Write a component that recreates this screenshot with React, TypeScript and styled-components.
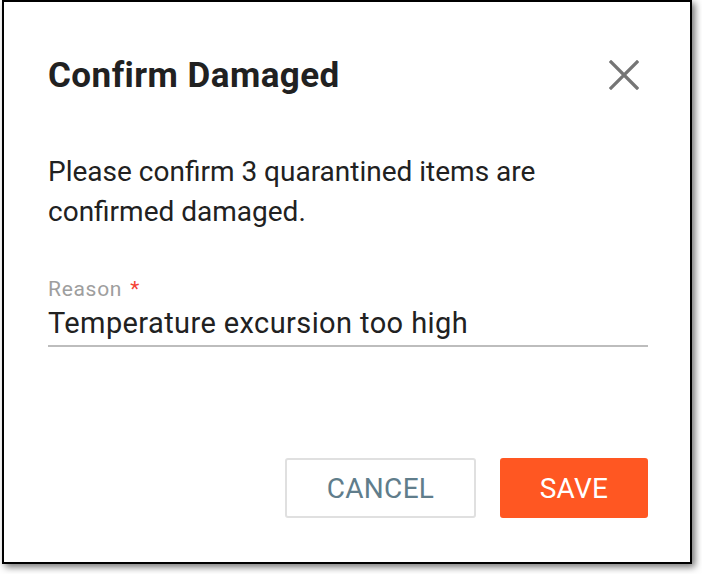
import React from "react";
import styled, { createGlobalStyle } from "styled-components";

const Global = createGlobalStyle`
  html, body { margin: 0; padding: 0; background: #ffffff; }
  body { font-family: Roboto, "Liberation Sans", Arial, sans-serif; }
`;

const Page = styled.div`
  width: 702px;
  height: 574px;
  background: #ffffff;
`;

const Dialog = styled.div`
  margin-left: 2px;
  width: 690px;
  height: 564px;
  box-sizing: border-box;
  border: 2px solid #000;
  background: #fff;
  box-shadow: 3px 3px 7px rgba(0, 0, 0, 0.55);
  padding: 54px 42px 44px 44px;
  display: flex;
  flex-direction: column;
`;

const Header = styled.div`
  display: flex;
  align-items: center;
  justify-content: space-between;
  height: 40px;
`;

const Title = styled.h2`
  margin: 0;
  font-size: 35px;
  line-height: 40px;
  font-weight: 700;
  color: #212121;
  letter-spacing: 0.45px;
`;

const CloseButton = styled.button`
  border: none;
  background: none;
  padding: 0;
  margin-right: 8px;
  margin-top: -2px;
  width: 32px;
  height: 32px;
  display: flex;
  align-items: center;
  justify-content: center;
  cursor: pointer;
`;

const Message = styled.p`
  margin: 56px 0 0 0;
  font-size: 28px;
  line-height: 40px;
  color: #212121;
`;

const Field = styled.div`
  margin-top: 45px;
  display: flex;
  flex-direction: column;
  gap: 4px;
`;

const Label = styled.label`
  font-size: 21px;
  color: #9e9e9e;
  line-height: 24px;
  letter-spacing: 0.7px;
`;

const Required = styled.span`
  color: #f44336;
  margin-left: 8px;
`;

const Value = styled.div`
  font-size: 29px;
  color: #212121;
  line-height: 36px;
  padding-bottom: 4px;
  border-bottom: 2px solid #bdbdbd;
  letter-spacing: 0.4px;
`;

const Actions = styled.div`
  margin-top: auto;
  display: flex;
  justify-content: flex-end;
  gap: 24px;
`;

const Button = styled.button<{ $primary?: boolean }>`
  height: 60px;
  min-width: ${(p) => (p.$primary ? "148px" : "191px")};
  box-sizing: border-box;
  border-radius: 3px;
  border: 2px solid ${(p) => (p.$primary ? "#ff5722" : "#e0e0e0")};
  background: ${(p) => (p.$primary ? "#ff5722" : "#ffffff")};
  color: ${(p) => (p.$primary ? "#ffffff" : "#607d8b")};
  font-family: Roboto, "Liberation Sans", Arial, sans-serif;
  font-size: 28px;
  font-weight: 400;
  letter-spacing: 0.3px;
  cursor: pointer;
`;

export default function App() {
  return (
    <Page>
      <Global />
      <Dialog>
        <Header>
          <Title>Confirm Damaged</Title>
          <CloseButton aria-label="Close">
            <svg width="30" height="30" viewBox="0 0 30 30">
              <path
                d="M2 2 L28 28 M28 2 L2 28"
                stroke="#757575"
                strokeWidth="3.2"
                strokeLinecap="square"
              />
            </svg>
          </CloseButton>
        </Header>
        <Message>
          Please confirm 3 quarantined items are
          <br />
          confirmed damaged.
        </Message>
        <Field>
          <Label>
            Reason<Required>*</Required>
          </Label>
          <Value>Temperature excursion too high</Value>
        </Field>
        <Actions>
          <Button>CANCEL</Button>
          <Button $primary>SAVE</Button>
        </Actions>
      </Dialog>
    </Page>
  );
}
